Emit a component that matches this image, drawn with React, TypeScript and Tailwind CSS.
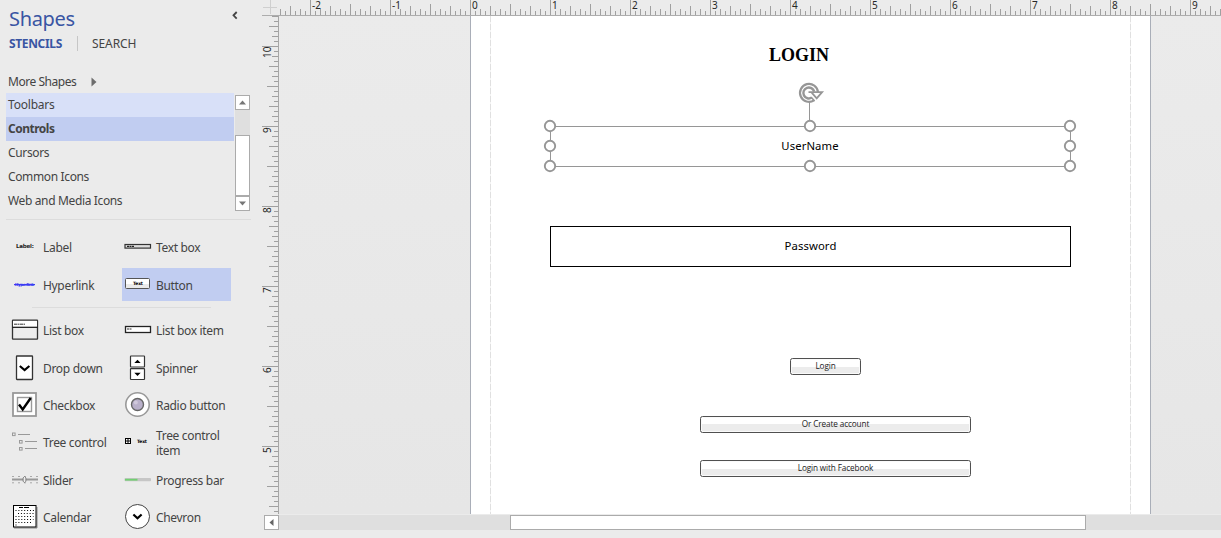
import React from "react";

const tickLength = (i: number) => {
  const m = ((i % 16) + 16) % 16;
  if (m === 0) return 16;
  if (m === 8) return 11;
  if (m % 4 === 0) return 9;
  if (m % 2 === 0) return 6;
  return 4;
};

function HorizontalRuler() {
  const ticks = Array.from({ length: 189 }, (_, k) => k - 38);
  const labels = [-2, -1, 0, 1, 2, 3, 4, 5, 6, 7, 8, 9];
  return (
    <svg className="block h-4 w-[943px] shrink-0 overflow-visible" viewBox="0 0 943 16" shapeRendering="crispEdges">
      {ticks.map((i) => (
        <rect key={i} x={192 + i * 5} y={15 - tickLength(i)} width="1" height={tickLength(i)} fill="#a0a0a0" />
      ))}
      <rect x="0" y="15" width="943" height="1" fill="#adadad" />
      {labels.map((n) => (
        <text key={n} x={194 + n * 80} y="9" className="font-['Noto_Sans',sans-serif] text-[10px]" fill="#262626">
          {n}
        </text>
      ))}
    </svg>
  );
}

function VerticalRuler() {
  const ticks = Array.from({ length: 100 }, (_, k) => k);
  return (
    <svg className="block h-[498px] w-[17px] shrink-0 overflow-visible" viewBox="0 0 17 498" shapeRendering="crispEdges">
      {ticks.map((k) => {
        const len = tickLength(k - 6);
        return <rect key={k} x={16 - len} y={k * 5} width={len} height="1" fill="#a0a0a0" />;
      })}
      <rect x="16" y="0" width="1" height="498" fill="#a6a6a6" />
      {[10, 9, 8, 7, 6, 5].map((n, i) => (
        <text
          key={n}
          transform={`translate(9 ${(n === 10 ? 42 : 37) + i * 80}) rotate(-90)`}
          className="font-['Noto_Sans',sans-serif] text-[10px]"
          fill="#262626"
        >
          {n}
        </text>
      ))}
    </svg>
  );
}

const tiny = "font-['DejaVu_Sans',sans-serif] font-bold";

const icons: Record<string, React.ReactNode> = {
  Label: (
    <text x="6" y="16" className={`${tiny} text-[5.5px]`} textLength="18" fill="#222">
      Label:
    </text>
  ),
  "Text box": (
    <>
      <rect x="2" y="12.5" width="25.5" height="3.6" fill="#ddd" stroke="#333" strokeWidth="1.2" />
      <path d="M4 14.4h7" stroke="#222" strokeWidth="1.3" strokeDasharray="2 .5" />
    </>
  ),
  Hyperlink: (
    <>
      <text x="5" y="15.6" className={`${tiny} text-[4px]`} textLength="19" fill="#1515f0">
        Hyperlink
      </text>
      <path d="M4 14.6h21" stroke="#3c3cf5" strokeWidth="1.2" />
    </>
  ),
  Button: (
    <>
      <rect x="2.5" y="8.5" width="24" height="10" rx="1" fill="#fff" stroke="#555" />
      <rect x="3" y="14" width="23" height="4" fill="#eaeaea" />
      <text x="10" y="15.2" className={`${tiny} text-[4.5px]`} textLength="10" fill="#000">
        Text
      </text>
    </>
  ),
  "List box": (
    <>
      <rect x="2.5" y="5.2" width="25" height="19" rx=".5" fill="#ededed" stroke="#333" strokeWidth="1.3" />
      <rect x="3" y="6" width="24" height="6" fill="#fff" />
      <path d="M2.5 12.3h25" stroke="#111" strokeWidth="1.2" />
      <path d="M4 9.2h11" stroke="#333" strokeDasharray="3 .5 2 .5" />
    </>
  ),
  "List box item": (
    <>
      <rect x="2.5" y="11.5" width="25" height="6" fill="#fff" stroke="#222" strokeWidth="1.3" />
      <path d="M4 14h5" stroke="#333" strokeDasharray="2 .5" />
    </>
  ),
  "Drop down": (
    <>
      <rect x="6.5" y="3" width="16" height="23.5" rx=".5" fill="#fff" stroke="#333" strokeWidth="1.3" />
      <path d="M9.8 13l4.8 4 4.8-4" fill="none" stroke="#000" strokeWidth="2.2" />
    </>
  ),
  Spinner: (
    <>
      <rect x="7.5" y="3" width="14" height="11" rx=".5" fill="#fff" stroke="#333" strokeWidth="1.2" />
      <rect x="7.5" y="15.7" width="14" height="10.8" rx=".5" fill="#fff" stroke="#333" strokeWidth="1.2" />
      <path d="M11.3 10l3.2-3.3 3.2 3.3zM11.3 19.8l3.2 3.3 3.2-3.3z" fill="#000" />
    </>
  ),
  Checkbox: (
    <>
      <rect x="3" y="3" width="23" height="23" fill="#fff" stroke="#999" strokeWidth="1.8" />
      <rect x="7.5" y="7.5" width="14" height="14" fill="#fff" stroke="#999" strokeWidth="1.4" />
      <path d="M9 14.5l3.7 5L20.7 8" fill="none" stroke="#000" strokeWidth="2.4" />
    </>
  ),
  "Radio button": (
    <>
      <circle cx="14.5" cy="14.5" r="11.7" fill="#fff" stroke="#999" strokeWidth="1.6" />
      <circle cx="14.5" cy="14.5" r="6" fill="#b9b0ca" stroke="#666" strokeWidth="1.4" />
      <circle cx="12.8" cy="12.5" r="2" fill="#d0c8dc" />
    </>
  ),
  "Tree control": (
    <g fill="none" stroke="#999">
      <rect x="2.5" y="6" width="2.6" height="2.6" />
      <path d="M8 7.5h12M15 14.5h12M15 21.5h12" />
      <rect x="9.5" y="13.5" width="2.6" height="2.6" />
      <rect x="9.5" y="20.5" width="2.6" height="2.6" />
    </g>
  ),
  "Tree control item": (
    <>
      <rect x="2.5" y="11.5" width="5" height="5" fill="#fff" stroke="#000" />
      <path d="M5 11.5v5M2.5 14h5" stroke="#000" />
      <text x="14" y="16" className={`${tiny} text-[4.5px]`} textLength="10" fill="#000">
        Text
      </text>
    </>
  ),
  Slider: (
    <>
      <path d="M2 14.5h26" stroke="#999" strokeWidth="2" />
      <path d="M2.5 11.5h25M2.5 17.8h25" stroke="#666" strokeDasharray="1 5" />
      <path d="M14.5 11.5l1.4 1.4v3.3l-1.4 1.5-1.4-1.5v-3.3z" fill="#eee" stroke="#777" strokeWidth=".9" />
    </>
  ),
  "Progress bar": (
    <>
      <rect x="1.5" y="13" width="26.5" height="3.2" rx="1" fill="#c6c6c6" />
      <rect x="2" y="13.8" width="12.5" height="1.8" fill="#72d072" />
    </>
  ),
  Calendar: (
    <>
      <path d="M4 26h23V5" fill="none" stroke="#888" />
      <rect x="3.5" y="3.5" width="22.5" height="21.5" fill="#fff" stroke="#000" />
      <path d="M9 5.5h4m1 0h5" stroke="#000" />
      <path d="M5.5 8.5h19M8 11.5h16M5.5 14.5h18M5.5 17.5h18M5.5 20.5h16M5.5 23h2" stroke="#000" strokeWidth="1.2" strokeDasharray="1 1.9" />
    </>
  ),
  Chevron: (
    <>
      <circle cx="14.5" cy="14.5" r="12" fill="#fff" stroke="#444" />
      <path d="M10.4 12.5l4.1 3.8 4.1-3.8" fill="none" stroke="#000" strokeWidth="2.2" />
    </>
  ),
};

function Stencil({ name, selected }: { name: string; selected?: boolean }) {
  return (
    <div className={`flex h-[33px] pt-0.5 pl-px ${selected ? "bg-[#c1cdf1]" : ""}`}>
      <svg className="h-[30px] w-[30px] shrink-0 overflow-visible" viewBox="0 0 30 30">
        {icons[name]}
      </svg>
      <div className="ml-[3px] flex h-[31px] w-[76px] items-center leading-[15px] tracking-[-0.32px]">{name}</div>
    </div>
  );
}

function Sidebar() {
  return (
    <aside className="flex h-[538px] w-[262px] shrink-0 flex-col pl-1.5 text-[12px] text-[#444]">
      <div className="flex h-[34px] justify-between pr-[23px] pl-[3px]">
        <h1 className="pt-[5px] text-[20px] leading-7 tracking-[-0.35px] text-[#3955a3]">Shapes</h1>
        <svg className="mt-[10px] h-[11px] w-2" viewBox="0 0 8 11">
          <path d="M5.7 2L2.5 5.3l3.2 3.3" fill="none" stroke="#444" strokeWidth="1.8" />
        </svg>
      </div>
      <div className="flex h-[38px] pl-[3px] leading-[19px]">
        <span className="w-[68px] font-bold tracking-[-0.35px] text-[#3955a3]">STENCILS</span>
        <span className="mt-0.5 h-[15px] w-px bg-[#c6c6c6]" />
        <span className="pl-[14px] tracking-[-0.1px]">SEARCH</span>
      </div>
      <div className="flex h-[21px] pl-0.5 leading-[20px]">
        <span className="w-[83px] tracking-[-0.46px]">More Shapes</span>
        <svg className="mt-[5px] h-[10px] w-[6px]" viewBox="0 0 6 10">
          <path d="M.5 .5l5 4.5-5 4.5z" fill="#6d6d6d" />
        </svg>
      </div>
      <div className="flex">
        <ul className="w-[228px] leading-6 tracking-[-0.36px] [&>li]:h-6 [&>li]:pl-0.5">
          <li className="bg-[#d8e0f8] tracking-[-0.2px]">Toolbars</li>
          <li className="bg-[#c1cdf1] font-bold tracking-[-0.5px]">Controls</li>
          <li>Cursors</li>
          <li>Common Icons</li>
          <li>Web and Media Icons</li>
        </ul>
        <div className="mt-0.5 ml-px flex h-[116px] w-[15px] flex-col bg-[#dfdfdf]">
          <div className="grid h-[15px] place-items-center border border-[#ababab] bg-white">
            <svg className="h-[5px] w-[7px]" viewBox="0 0 7 5"><path d="M0 4.5L3.5.5 7 4.5z" fill="#777" /></svg>
          </div>
          <div className="mt-[25px] h-[61px] border border-[#ababab] bg-white" />
          <div className="grid h-[15px] place-items-center border border-[#ababab] bg-white">
            <svg className="h-[5px] w-[7px]" viewBox="0 0 7 5"><path d="M0 .5l3.5 4L7 .5z" fill="#777" /></svg>
          </div>
        </div>
      </div>
      <div className="mt-[6px] h-px w-[245px] bg-[#dcdcdc]" />
      <div className="mt-[10px] ml-[3px] grid grid-cols-[113px_109px] grid-rows-[38px_33px]">
        <Stencil name="Label" />
        <Stencil name="Text box" />
        <Stencil name="Hyperlink" />
        <Stencil name="Button" selected />
      </div>
      <div className="mt-[6px] ml-[26px] h-px w-[179px] bg-[#dcdcdc]" />
      <div className="mt-[5px] ml-[3px] grid grid-cols-[113px_109px] grid-rows-[38px_37px_37px_38px_37px_33px]">
        {["List box", "List box item", "Drop down", "Spinner", "Checkbox", "Radio button", "Tree control", "Tree control item", "Slider", "Progress bar", "Calendar", "Chevron"].map((n) => (
          <Stencil key={n} name={n} />
        ))}
      </div>
    </aside>
  );
}

function Selection() {
  const points = [
    [11, 41], [271, 41], [531, 41],
    [11, 61], [531, 61],
    [11, 81], [271, 81], [531, 81],
  ];
  return (
    <svg className="absolute top-[69px] left-[260px] h-[90px] w-[542px] overflow-visible" viewBox="0 0 542 90">
      <path d="M11.5 41.5h520v40h-520zM270.5 17v19" fill="none" stroke="#969696" />
      {points.map(([x, y]) => (
        <circle key={`${x}-${y}`} cx={x} cy={y} r="5.2" fill="#fff" stroke="#969696" strokeWidth="1.9" />
      ))}
      <circle cx="270" cy="8" r="9" fill="#fff" />
      <g fill="none" stroke="#969696">
        <path d="M275 15.4A9 9 0 1 1 279 7.2" strokeWidth="2.2" />
        <path d="M272.8 12.6A5.5 5.5 0 1 1 275.2 6.6" strokeWidth="2.4" />
        <path d="M272.2 12.2L275.6 16" strokeWidth="1.6" />
        <path d="M269.5 7.1h13.6l-5.4 6.2-5-5.6" strokeWidth="1.8" />
      </g>
    </svg>
  );
}

const uiButton =
  "absolute flex h-[17px] items-center justify-center rounded-[2.5px] border border-[#505050] bg-[linear-gradient(#fff_50%,#ececec_50%)] shadow-[inset_0_0_0_1px_#fafafa] font-['Open_Sans',sans-serif] text-[8.2px] leading-none tracking-[-0.12px] text-[#222]";

function Canvas() {
  return (
    <div className="relative h-[498px] w-[942px] overflow-hidden bg-linear-to-b from-[#ebebeb] to-[#e6e6e6] text-black">
      <div className="ml-[191px] flex h-full w-[681px] justify-between border-x border-[#a9aeb8] bg-white px-[19px]">
        <div className="w-px bg-[repeating-linear-gradient(#e0e0e0_0_6px,#f4f4f4_6px_8px)]" />
        <div className="w-px bg-[repeating-linear-gradient(#e0e0e0_0_6px,#f4f4f4_6px_8px)]" />
      </div>
      <div className="absolute top-[29px] left-[490px] font-['Liberation_Serif',serif] text-[18px] leading-[21px] font-bold">LOGIN</div>
      <Selection />
      <div className="absolute top-[110px] left-[271px] flex h-[41px] w-[520px] items-center justify-center font-['Noto_Sans',sans-serif] text-[11.3px] tracking-[0.1px]">UserName</div>
      <div className="absolute top-[210px] left-[271px] flex h-[41px] w-[521px] items-center justify-center border border-black font-['Noto_Sans',sans-serif] text-[11.3px] tracking-[0.1px]">Password</div>
      <div className={`${uiButton} top-[342px] left-[511px] w-[71px]`}>Login</div>
      <div className={`${uiButton} top-[400px] left-[421px] w-[271px]`}>Or Create account</div>
      <div className={`${uiButton} top-[444px] left-[421px] w-[271px]`}>Login with Facebook</div>
    </div>
  );
}

export default function App() {
  return (
    <div className="flex h-[538px] w-[1221px] overflow-hidden bg-[#ebebeb] font-['Noto_Sans',sans-serif]">
      <Sidebar />
      <main className="flex w-[959px] flex-col">
        <div className="flex h-4">
          <svg className="h-4 w-4 shrink-0" viewBox="0 0 16 16" shapeRendering="crispEdges">
            <path d="M1 7.5h14M8.5 0v14" stroke="#cfcfcf" />
            <path d="M0 15.5h16" stroke="#adadad" />
          </svg>
          <HorizontalRuler />
        </div>
        <div className="flex h-[498px]">
          <VerticalRuler />
          <Canvas />
        </div>
        <div className="mt-px ml-0.5 flex h-[15px] bg-[#dfdfdf]">
          <div className="grid w-[15px] place-items-center border border-[#ababab] bg-white">
            <svg className="h-[7px] w-[5px]" viewBox="0 0 5 7"><path d="M4.5 0L.5 3.5l4 3.5z" fill="#666" /></svg>
          </div>
          <div className="ml-[231px] w-[576px] border border-[#ababab] bg-white" />
        </div>
      </main>
    </div>
  );
}
